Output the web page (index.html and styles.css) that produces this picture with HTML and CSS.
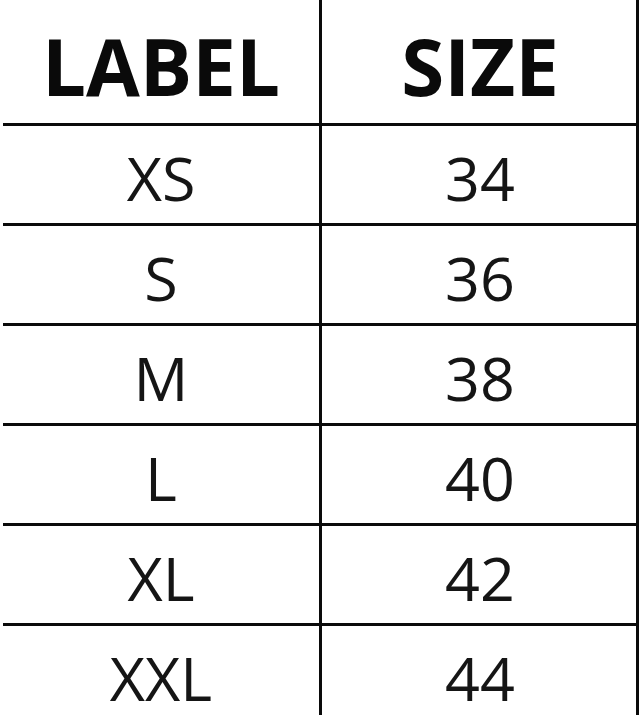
FILE: index.html
```html
<!DOCTYPE html>
<html>
<head>
<meta charset="utf-8">
<link rel="stylesheet" href="styles.css">
</head>
<body>
<table class="size-table">
  <thead>
    <tr class="head-row">
      <th class="cell head left">LABEL</th>
      <th class="cell head right">SIZE</th>
    </tr>
  </thead>
  <tbody>
    <tr class="row"><td class="cell left">XS</td><td class="cell right">34</td></tr>
    <tr class="row"><td class="cell left">S</td><td class="cell right">36</td></tr>
    <tr class="row"><td class="cell left">M</td><td class="cell right">38</td></tr>
    <tr class="row"><td class="cell left">L</td><td class="cell right">40</td></tr>
    <tr class="row"><td class="cell left">XL</td><td class="cell right">42</td></tr>
    <tr class="row"><td class="cell left">XXL</td><td class="cell right">44</td></tr>
  </tbody>
</table>
</body>
</html>
```

FILE: styles.css
```css
html, body {
  margin: 0;
  padding: 0;
  background: #ffffff;
  overflow: hidden;
}

.size-table {
  margin-left: 3px;
  width: 636px;
  border-collapse: collapse;
  table-layout: fixed;
  font-family: "Open Sans", "Liberation Sans", sans-serif;
  color: #151515;
}

.cell {
  padding: 0;
  text-align: center;
  vertical-align: middle;
  border-bottom: 3px solid #0a0a0a;
  font-weight: 400;
  font-size: 61px;
  line-height: 91px;
  padding-top: 6px;
}

.left {
  width: 316px;
  border-right: 3px solid #0a0a0a;
}

.right {
  border-right: 3px solid #0a0a0a;
  padding-left: 2px;
}

.head {
  font-weight: 700;
  font-size: 78px;
  line-height: 113px;
  padding-top: 10px;
  color: #0a0a0a;
}
```
